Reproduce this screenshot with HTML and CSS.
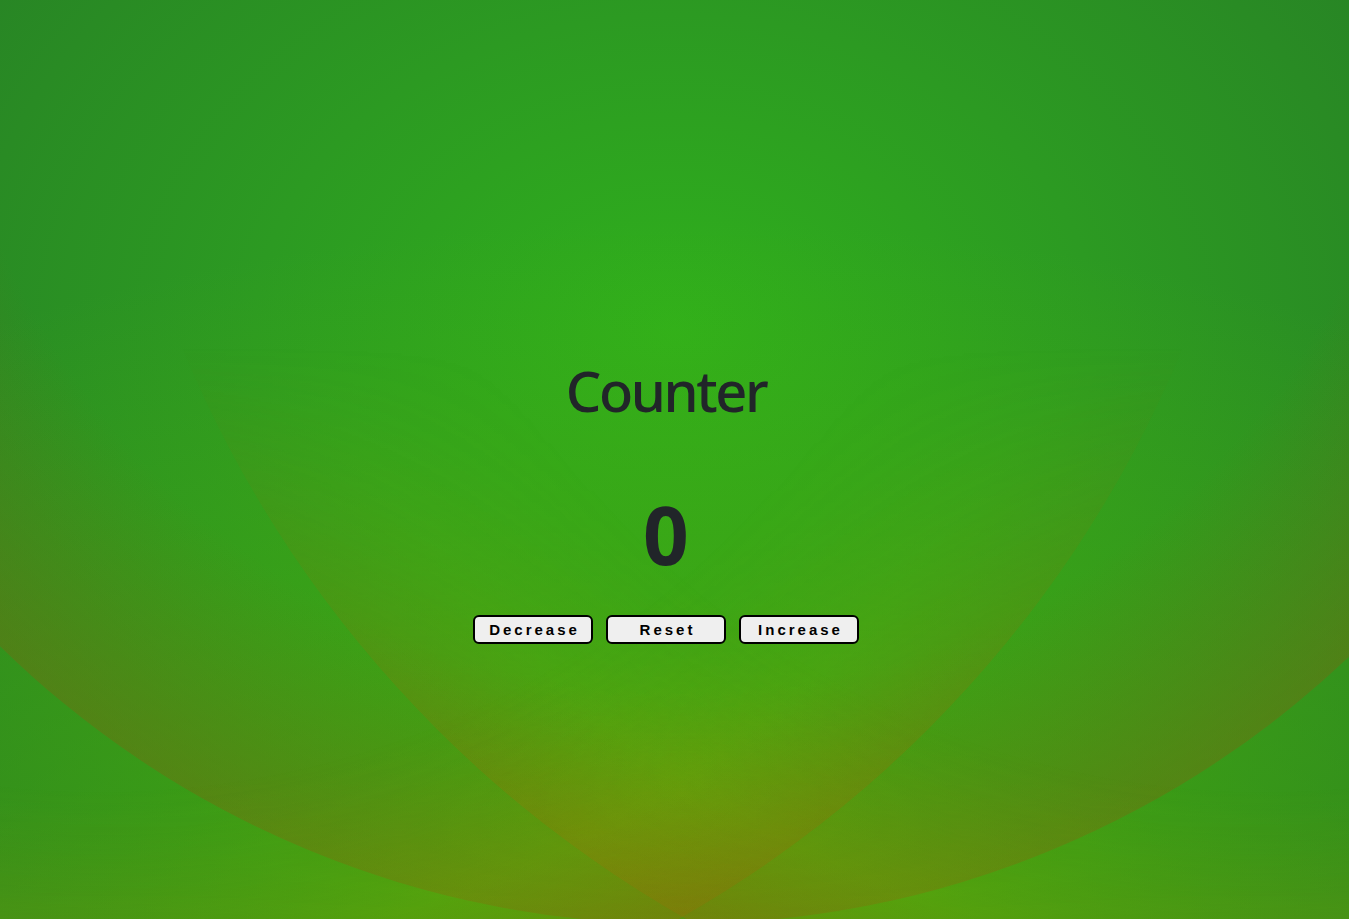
FILE: index.html
```html
<!DOCTYPE html>
<html lang="en">
<head>
<meta charset="utf-8">
<title>Counter</title>
<link rel="stylesheet" href="styles.css">
</head>
<body>
<div class="backdrop" aria-hidden="true">
  <div class="shape shape-big"></div>
  <div class="shape shape-left"></div>
  <div class="shape shape-right"></div>
</div>
<main class="counter">
  <h1 class="counter-title">Counter</h1>
  <div class="counter-value">0</div>
  <div class="counter-actions">
    <button class="btn" type="button">Decrease</button>
    <button class="btn" type="button">Reset</button>
    <button class="btn" type="button">Increase</button>
  </div>
</main>
</body>
</html>
```
FILE: styles.css
```css
html, body {
  margin: 0;
  padding: 0;
  height: 100%;
}

body {
  position: relative;
  min-height: 919px;
  overflow: hidden;
  color: #212529;
  font-family: "Noto Sans", "Open Sans", sans-serif;
  background:
    radial-gradient(ellipse 1300px 700px at 675px 919px, rgba(80,180,5,0.75), rgba(80,180,5,0) 100%),
    radial-gradient(ellipse 1000px 750px at 675px 330px, #2fb01c 0%, #2c9a22 42%, #267c26 100%);
}

/* decorative backdrop: overlapping tinted circles */
.backdrop {
  position: absolute;
  inset: 0;
  overflow: hidden;
  z-index: 0;
  pointer-events: none;
}

.shape {
  position: absolute;
  border-radius: 50%;
}

.shape-left,
.shape-right {
  top: -1272px;
  width: 2344px;
  height: 2344px;
  background: radial-gradient(circle closest-side,
    rgba(155,160,0,0) 76%,
    rgba(155,160,0,0.24) 90%,
    rgba(140,118,8,0.44) 100%);
  -webkit-mask-image: linear-gradient(to bottom, transparent 69%, #000 94%);
  mask-image: linear-gradient(to bottom, transparent 69%, #000 94%);
}

.shape-left {
  left: 93px;
}

.shape-right {
  left: -1072px;
}

.shape-big {
  left: -291px;
  top: -1018px;
  width: 1942px;
  height: 1942px;
  background: radial-gradient(circle closest-side, rgba(125,100,15,0) 76%, rgba(125,100,15,0.38) 100%);
}

.counter {
  position: relative;
  z-index: 1;
  display: flex;
  flex-direction: column;
  align-items: center;
  padding: 362px 17px 0 0;
}

.counter-title {
  margin: 0 0 76px;
  font-size: 56px;
  line-height: 1;
  font-weight: 500;
  letter-spacing: -2.4px;
}

.counter-value {
  margin: 0 0 41px;
  font-size: 80px;
  line-height: 1;
  font-weight: 700;
}

.counter-actions {
  display: flex;
  gap: 13px;
}

.btn {
  box-sizing: border-box;
  width: 120px;
  height: 29px;
  padding: 0 0 0 3px;
  border: 2px solid #000;
  border-radius: 6px;
  background: #efefef;
  color: #000;
  font-family: "Liberation Sans", Arial, sans-serif;
  font-size: 15px;
  font-weight: 700;
  letter-spacing: 3px;
  line-height: 1;
  cursor: pointer;
}
```
